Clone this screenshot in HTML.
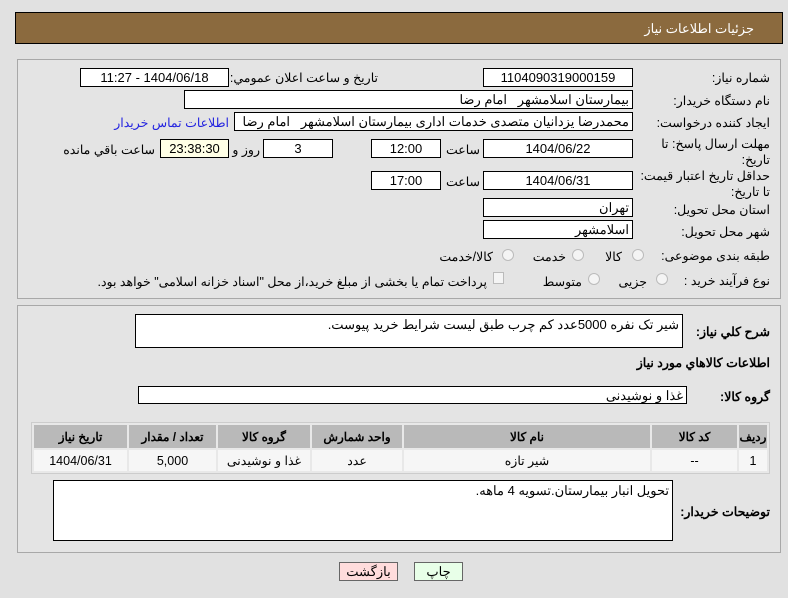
<!DOCTYPE html>
<html><head><meta charset="utf-8"><style>
*{box-sizing:border-box;margin:0;padding:0}
body{width:788px;height:598px;background:#e1e1e1;font-family:Tahoma,"Liberation Sans","Noto Sans CJK SC",sans-serif;font-size:12px;color:#000;position:relative;overflow:hidden;direction:rtl}
.a{position:absolute;white-space:nowrap}
.hdr{left:15px;top:12px;width:768px;height:32px;background:#8b6a3e;border:1px solid #000}
.hdr span{position:absolute;right:28px;top:8px;color:#fff;font-size:13px}
.pan{position:absolute;border:1px solid #a8a8a8;background:#e4e4e4}
.f{position:absolute;background:#fff;border:1px solid #000;height:19px;line-height:17px;text-align:center;font-size:13px}
.f.r{text-align:right;padding-right:3px}
.l{position:absolute;white-space:nowrap;text-align:right;font-size:12.5px}
.b{font-weight:bold}
.rad{position:absolute;width:12px;height:12px;border:1px solid #bbb;border-radius:50%;background:#f4f4f4}
table{position:absolute;left:31px;top:422px;width:739px;border-collapse:separate;border-spacing:2px;background:#e8e8e8;border:1px solid #ccc}
th{background:#b9b9b9;height:23px;font-size:12px}
td{background:#f6f6f6;height:21px;text-align:center;font-size:12.5px}
.btn{position:absolute;height:19px;border:1px solid #666;text-align:center;line-height:17px;font-size:13px}
</style></head><body>
<div class="a hdr"><span>جزئیات اطلاعات نیاز</span></div>
<div class="pan" style="left:17px;top:59px;width:764px;height:240px"></div>
<div class="pan" style="left:17px;top:305px;width:764px;height:248px"></div>

<div class="l" style="right:18px;top:70px">شماره نیاز:</div>
<div class="f" style="left:483px;top:68px;width:150px">1104090319000159</div>
<div class="l" style="right:410px;top:70px">تاریخ و ساعت اعلان عمومي:</div>
<div class="f" style="left:80px;top:68px;width:149px">1404/06/18 - 11:27</div>

<div class="l" style="right:18px;top:93px">نام دستگاه خریدار:</div>
<div class="f r" style="left:184px;top:90px;width:449px">بیمارستان اسلامشهر &nbsp; امام رضا</div>

<div class="l" style="right:18px;top:115px">ایجاد کننده درخواست:</div>
<div class="f r" style="left:234px;top:112px;width:399px">محمدرضا یزدانیان متصدی خدمات اداری بیمارستان اسلامشهر &nbsp; امام رضا</div>
<div class="l" style="right:559px;top:115px;color:#2323e0">اطلاعات تماس خریدار</div>

<div class="l" style="right:18px;top:136px;line-height:16px">مهلت ارسال پاسخ: تا<br>تاریخ:</div>
<div class="f" style="left:483px;top:139px;width:150px">1404/06/22</div>
<div class="l" style="right:308px;top:142px">ساعت</div>
<div class="f" style="left:371px;top:139px;width:70px">12:00</div>
<div class="f" style="left:263px;top:139px;width:70px">3</div>
<div class="l" style="right:528px;top:142px">روز و</div>
<div class="f" style="left:160px;top:139px;width:69px;background:#ffffe6">23:38:30</div>
<div class="l" style="right:633px;top:142px">ساعت باقي مانده</div>

<div class="l" style="right:18px;top:168px;line-height:16px;text-align:right">حداقل تاریخ اعتبار قیمت:<br>تا تاریخ:</div>
<div class="f" style="left:483px;top:171px;width:150px">1404/06/31</div>
<div class="l" style="right:308px;top:174px">ساعت</div>
<div class="f" style="left:371px;top:171px;width:70px">17:00</div>

<div class="l" style="right:18px;top:202px">استان محل تحویل:</div>
<div class="f r" style="left:483px;top:198px;width:150px">تهران</div>
<div class="l" style="right:18px;top:224px">شهر محل تحویل:</div>
<div class="f r" style="left:483px;top:220px;width:150px">اسلامشهر</div>

<div class="l" style="right:18px;top:248px">طبقه بندی موضوعی:</div>
<div class="rad" style="left:632px;top:249px"></div><div class="l" style="right:166px;top:249px">کالا</div>
<div class="rad" style="left:572px;top:249px"></div><div class="l" style="right:222px;top:249px">خدمت</div>
<div class="rad" style="left:502px;top:249px"></div><div class="l" style="right:295px;top:249px">کالا/خدمت</div>

<div class="l" style="right:18px;top:273px">نوع فرآیند خرید :</div>
<div class="rad" style="left:656px;top:273px"></div><div class="l" style="right:141px;top:274px">جزیی</div>
<div class="rad" style="left:588px;top:273px"></div><div class="l" style="right:206px;top:274px">متوسط</div>
<div class="a" style="left:493px;top:272px;width:11px;height:12px;border:1px solid #bbb;background:#f4f4f4"></div>
<div class="l" style="right:301px;top:274px">پرداخت تمام یا بخشی از مبلغ خرید،از محل "اسناد خزانه اسلامی" خواهد بود.</div>

<div class="l b" style="right:18px;top:324px">شرح کلي نياز:</div>
<div class="f r" style="left:135px;top:314px;width:548px;height:34px;text-align:right;line-height:20px">شیر تک نفره 5000عدد کم چرب طبق لیست شرایط خرید پیوست.</div>
<div class="l b" style="right:18px;top:355px">اطلاعات کالاهاي مورد نياز</div>
<div class="l b" style="right:18px;top:389px">گروه کالا:</div>
<div class="f r" style="left:138px;top:386px;width:549px;height:18px">غذا و نوشیدنی</div>

<table dir="rtl">
<tr><th style="width:28px">ردیف</th><th style="width:85px">کد کالا</th><th style="width:246px">نام کالا</th><th style="width:90px">واحد شمارش</th><th style="width:92px">گروه کالا</th><th style="width:87px">تعداد / مقدار</th><th>تاریخ نیاز</th></tr>
<tr><td>1</td><td>--</td><td>شیر تازه</td><td>عدد</td><td>غذا و نوشیدنی</td><td>5,000</td><td>1404/06/31</td></tr>
</table>

<div class="l b" style="right:18px;top:504px">توضیحات خریدار:</div>
<div class="f r" style="left:53px;top:480px;width:620px;height:61px;line-height:20px;text-align:right">تحویل انبار بیمارستان.تسویه 4 ماهه.</div>

<div class="btn" style="left:339px;top:562px;width:59px;background:#ffdcdc">بازگشت</div>
<div class="btn" style="left:414px;top:562px;width:49px;background:#e8ffe8">چاپ</div>
</body></html>
